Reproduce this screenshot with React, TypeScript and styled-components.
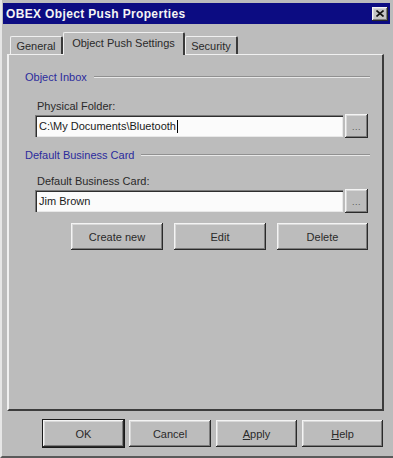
import styled, { createGlobalStyle } from "styled-components";

const GlobalStyle = createGlobalStyle`
  html, body {
    margin: 0;
    padding: 0;
    background: #bcbcbc;
  }
  * {
    box-sizing: border-box;
  }
`;

// 3D 테두리 (Win95 스타일)
const raised = `
  box-shadow: inset -1px -1px #2a2a2a, inset 1px 1px #f4f4f4,
    inset -2px -2px #7c7c7c, inset 2px 2px #d8d8d8;
`;

const Window = styled.div`
  width: 393px;
  height: 458px;
  padding: 3px 3px 0 3px;
  background: #bcbcbc;
  border-left: 2px solid #e6e6e6;
  border-bottom: 2px solid #5a5a5a;
  display: flex;
  flex-direction: column;
  font-family: "Liberation Sans", Arial, sans-serif;
  font-size: 11px;
  color: #1a1a1a;
`;

const TitleBar = styled.div`
  height: 21px;
  margin-left: -2px;
  background: #0c0c82;
  display: flex;
  align-items: center;
  justify-content: space-between;
  padding: 0 2px 0 3px;
`;

const Title = styled.span`
  color: #f4f4f4;
  font-weight: bold;
  font-size: 12px;
  letter-spacing: 0.35px;
`;

const CloseBox = styled.div`
  width: 16px;
  height: 14px;
  background: #c4c4c4;
  ${raised}
  display: flex;
  align-items: center;
  justify-content: center;
`;

const Body = styled.div`
  flex: 1;
  display: flex;
  flex-direction: column;
  padding: 0 6px 0 2px;
`;

const TabRow = styled.div`
  margin-top: 8px;
  height: 22px;
  display: flex;
  align-items: flex-end;
  padding-left: 3px;
`;

const Tab = styled.div<{ $active?: boolean; $w: number }>`
  width: ${(p) => p.$w}px;
  height: ${(p) => (p.$active ? 23 : 18)}px;
  margin-bottom: ${(p) => (p.$active ? -1 : 0)}px;
  position: relative;
  z-index: ${(p) => (p.$active ? 1 : 0)};
  background: #bcbcbc;
  border-top: 1px solid #f0f0f0;
  border-left: 1px solid #f0f0f0;
  border-right: 2px solid #3a3a3a;
  border-radius: 2px 2px 0 0;
  display: flex;
  align-items: center;
  justify-content: center;
  padding-bottom: ${(p) => (p.$active ? 3 : 0)}px;
  color: #2a2a2a;
`;

const Panel = styled.div`
  height: 357px;
  background: #bcbcbc;
  border-top: 1px solid #f0f0f0;
  border-left: 2px solid #f0f0f0;
  border-right: 2px solid #3c3c3c;
  border-bottom: 2px solid #3c3c3c;
  padding: 15px 12px 0 16px;
  display: flex;
  flex-direction: column;
`;

const GroupHeader = styled.div<{ $gap: number }>`
  height: 14px;
  margin-top: ${(p) => p.$gap}px;
  display: flex;
  align-items: center;
  gap: 7px;
`;

const GroupTitle = styled.span`
  color: #2b2b9c;
  white-space: nowrap;
`;

const GroupRule = styled.div`
  flex: 1;
  border-top: 1px solid #909090;
  border-bottom: 1px solid #e8e8e8;
`;

const Field = styled.div`
  margin: 0 2px 0 10px;
  display: flex;
  flex-direction: column;
`;

const FieldLabel = styled.label<{ $gap: number }>`
  margin-top: ${(p) => p.$gap}px;
  padding-left: 2px;
  line-height: 14px;
  height: 15px;
  color: #2a2a2a;
`;

const FieldRow = styled.div`
  display: flex;
  align-items: center;
  gap: 2px;
`;

const TextBox = styled.div`
  flex: 1;
  height: 22px;
  background: #fbfbfb;
  box-shadow: inset 1px 1px #7a7a7a, inset 2px 2px #2e2e2e,
    inset -1px -1px #e8e8e8;
  padding: 0 4px;
  display: flex;
  align-items: center;
  color: #1a1a1a;
`;

const Caret = styled.span`
  display: inline-block;
  width: 1px;
  height: 13px;
  background: #000;
  margin-left: 1px;
`;

const BrowseButton = styled.div`
  width: 23px;
  height: 24px;
  background: #bcbcbc;
  ${raised}
  display: flex;
  align-items: flex-end;
  justify-content: center;
  padding-bottom: 6px;
  font-size: 9px;
  color: #555;
  letter-spacing: 0.5px;
`;

const ActionRow = styled.div`
  margin: 10px 2px 0 0;
  display: flex;
  justify-content: flex-end;
  gap: 11px;
`;

const PushButton = styled.div<{ $w: number; $default?: boolean }>`
  width: ${(p) => p.$w}px;
  height: 27px;
  background: #bcbcbc;
  ${raised}
  ${(p) => (p.$default ? "outline: 1px solid #1a1a1a; outline-offset: 0;" : "")}
  display: flex;
  align-items: center;
  justify-content: center;
  color: #2a2a2a;
  font-size: 11px;
`;

const Footer = styled.div`
  margin-top: 9px;
  display: flex;
  justify-content: flex-end;
  gap: 5px;
  padding-right: 1px;
`;

const Mnemonic = styled.span`
  text-decoration: underline;
`;

export default () => {
  return (
    <>
      <GlobalStyle />
      <Window>
        <TitleBar>
          <Title>OBEX Object Push Properties</Title>
          <CloseBox>
            <svg width="8" height="7" viewBox="0 0 8 7">
              <path d="M0.5 0.5 L7.5 6.5 M7.5 0.5 L0.5 6.5" stroke="#111" strokeWidth="1.6" />
            </svg>
          </CloseBox>
        </TitleBar>
        <Body>
          <TabRow>
            <Tab $w={53}>General</Tab>
            <Tab $w={122} $active>
              Object Push Settings
            </Tab>
            <Tab $w={53}>Security</Tab>
          </TabRow>
          <Panel>
            <GroupHeader $gap={0}>
              <GroupTitle>Object Inbox</GroupTitle>
              <GroupRule />
            </GroupHeader>
            <Field>
              <FieldLabel $gap={15}>Physical Folder:</FieldLabel>
              <FieldRow>
                <TextBox>
                  C:\My Documents\Bluetooth
                  <Caret />
                </TextBox>
                <BrowseButton>...</BrowseButton>
              </FieldRow>
            </Field>
            <GroupHeader $gap={10}>
              <GroupTitle>Default Business Card</GroupTitle>
              <GroupRule />
            </GroupHeader>
            <Field>
              <FieldLabel $gap={12}>Default Business Card:</FieldLabel>
              <FieldRow>
                <TextBox>Jim Brown</TextBox>
                <BrowseButton>...</BrowseButton>
              </FieldRow>
            </Field>
            <ActionRow>
              <PushButton $w={92}>Create new</PushButton>
              <PushButton $w={92}>Edit</PushButton>
              <PushButton $w={91}>Delete</PushButton>
            </ActionRow>
          </Panel>
          <Footer>
            <PushButton $w={81} $default>
              OK
            </PushButton>
            <PushButton $w={82}>Cancel</PushButton>
            <PushButton $w={81}>
              <Mnemonic>A</Mnemonic>pply
            </PushButton>
            <PushButton $w={81}>
              <Mnemonic>H</Mnemonic>elp
            </PushButton>
          </Footer>
        </Body>
      </Window>
    </>
  );
};
